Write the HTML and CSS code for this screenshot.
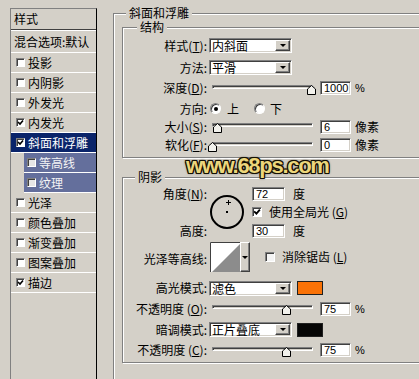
FILE: index.html
```html
<!DOCTYPE html>
<html lang="zh-CN">
<head>
    <meta charset="UTF-8">
    <meta name="viewport" content="width=device-width, initial-scale=1.0">
    <title>图层样式 - 斜面和浮雕</title>
    <link rel="stylesheet" href="styles.css">
</head>
<body>

    <div class="sidebar">
        <div class="side-head">样式</div>
        <div class="side-blend">混合选项:默认</div>
        <ul class="fx-list">
            <li class="fx"><span class="cb"></span>投影</li>
            <li class="fx"><span class="cb"></span>内阴影</li>
            <li class="fx"><span class="cb"></span>外发光</li>
            <li class="fx"><span class="cb"><svg viewBox="0 0 7 7"><polyline points="1,3 3,5 6,1.5"/></svg></span>内发光</li>
            <li class="fx current"><span class="cb"><svg viewBox="0 0 7 7"><polyline points="1,3 3,5 6,1.5"/></svg></span>斜面和浮雕</li>
            <li class="fx sub"><span class="cb"></span>等高线</li>
            <li class="fx sub"><span class="cb"></span>纹理</li>
            <li class="fx"><span class="cb"></span>光泽</li>
            <li class="fx"><span class="cb"></span>颜色叠加</li>
            <li class="fx"><span class="cb"></span>渐变叠加</li>
            <li class="fx"><span class="cb"></span>图案叠加</li>
            <li class="fx"><span class="cb"><svg viewBox="0 0 7 7"><polyline points="1,3 3,5 6,1.5"/></svg></span>描边</li>
        </ul>
    </div>

    <div class="main">
        <fieldset class="group bevel">
            <legend>斜面和浮雕</legend>

            <fieldset class="group structure">
                <legend>结构</legend>
                <div class="form">
                    <span class="lbl">样式(<u>T</u>):</span>
                    <div class="ctrl">
                        <div class="select"><span>内斜面</span><i class="drop"></i></div>
                    </div>

                    <span class="lbl">方法:</span>
                    <div class="ctrl">
                        <div class="select"><span>平滑</span><i class="drop"></i></div>
                    </div>

                    <span class="lbl">深度(<u>D</u>):</span>
                    <div class="ctrl">
                        <div class="slider"><svg class="thumb" style="left: 100%" viewBox="0 0 9 10"><path d="M0.5 9.5V4L4.5 0.5L8.5 4V9.5Z"/></svg></div>
                        <span class="num">1000</span><span class="unit pct">%</span>
                    </div>

                    <span class="lbl">方向:</span>
                    <div class="ctrl radios">
                        <span class="radio on"></span><span class="rtext">上</span>
                        <span class="radio"></span><span class="rtext">下</span>
                    </div>

                    <span class="lbl">大小(<u>S</u>):</span>
                    <div class="ctrl">
                        <div class="slider"><svg class="thumb" style="left: 5%" viewBox="0 0 9 10"><path d="M0.5 9.5V4L4.5 0.5L8.5 4V9.5Z"/></svg></div>
                        <span class="num">6</span><span class="unit">像素</span>
                    </div>

                    <span class="lbl">软化(<u>F</u>):</span>
                    <div class="ctrl">
                        <div class="slider"><svg class="thumb" style="left: 0%" viewBox="0 0 9 10"><path d="M0.5 9.5V4L4.5 0.5L8.5 4V9.5Z"/></svg></div>
                        <span class="num">0</span><span class="unit">像素</span>
                    </div>
                </div>
            </fieldset>

            <fieldset class="group shading">
                <legend>阴影</legend>
                <div class="angle">
                    <span class="lbl l1">角度(<u>N</u>):</span>
                    <span class="lbl l3">高度:</span>
                    <div class="dial">
                        <svg width="36" height="36" viewBox="0 0 36 36">
                            <circle cx="18" cy="18" r="16" fill="none" stroke="#000" stroke-width="2"/>
                            <rect x="17" y="17" width="2" height="2" fill="#000"/>
                            <path d="M17 8.5H22M19.5 6V11" stroke="#000" stroke-width="1" fill="none"/>
                        </svg>
                    </div>
                    <div class="ctrl c1"><span class="num wide">72</span><span class="unit deg">度</span></div>
                    <div class="ctrl c2">
                        <span class="cb big"><svg viewBox="0 0 7 7"><polyline points="1,3 3,5 6,1.5"/></svg></span>
                        <span class="cb-text">使用全局光 (<u>G</u>)</span>
                    </div>
                    <div class="ctrl c3"><span class="num wide">30</span><span class="unit deg">度</span></div>
                </div>

                <div class="form shade-rows">
                    <span class="lbl">光泽等高线:</span>
                    <div class="ctrl contour-ctrl">
                        <div class="contour">
                            <svg width="30" height="30" viewBox="0 0 30 30">
                                <rect x="0" y="0" width="30" height="30" fill="#fff"/>
                                <polygon points="2,30 30,2 30,30" fill="#8c8c8c"/>
                                <path d="M0.5 30V0.5H30" stroke="#404040" fill="none"/>
                            </svg>
                            <i class="drop tall"></i>
                        </div>
                        <span class="cb big light"></span>
                        <span class="cb-text">消除锯齿 (<u>L</u>)</span>
                    </div>

                    <span class="lbl">高光模式:</span>
                    <div class="ctrl">
                        <div class="select"><span>滤色</span><i class="drop"></i></div>
                        <span class="swatch orange"></span>
                    </div>

                    <span class="lbl">不透明度 (<u>O</u>):</span>
                    <div class="ctrl">
                        <div class="slider"><svg class="thumb" style="left: 75%" viewBox="0 0 9 10"><path d="M0.5 9.5V4L4.5 0.5L8.5 4V9.5Z"/></svg></div>
                        <span class="num">75</span><span class="unit pct">%</span>
                    </div>

                    <span class="lbl">暗调模式:</span>
                    <div class="ctrl">
                        <div class="select"><span>正片叠底</span><i class="drop"></i></div>
                        <span class="swatch black"></span>
                    </div>

                    <span class="lbl">不透明度 (<u>C</u>):</span>
                    <div class="ctrl">
                        <div class="slider"><svg class="thumb" style="left: 75%" viewBox="0 0 9 10"><path d="M0.5 9.5V4L4.5 0.5L8.5 4V9.5Z"/></svg></div>
                        <span class="num">75</span><span class="unit pct">%</span>
                    </div>
                </div>
            </fieldset>
        </fieldset>
    </div>

    <div class="watermark">www.68ps.com</div>

</body>
</html>
```

FILE: styles.css
```css
* {
    box-sizing: border-box;
}
html, body {
    margin: 0;
    height: 100%;
}
body {
    display: flex;
    position: relative;
    overflow: hidden;
    background: #d4d0c8;
    color: #000;
    font: 12px/14px "Noto Sans CJK SC", "Liberation Sans", sans-serif;
}
u {
    text-decoration: underline;
    text-underline-offset: 1px;
}

/* effect list on the left */
.sidebar {
    flex: 0 0 87px;
    margin: 8px 0 0 10px;
    border-top: 1px solid #808080;
    border-left: 1px solid #808080;
    border-right: 1px solid #000;
}
.side-head {
    height: 21px;
    padding-left: 3px;
    line-height: 20px;
    border-bottom: 1px solid #404040;
    box-shadow: 0 1px 0 #fff;
}
.side-blend {
    height: 22px;
    margin-top: 1px;
    padding-left: 3px;
    line-height: 21px;
    white-space: nowrap;
    border-bottom: 1px solid #fff;
}
.fx-list {
    margin: 0;
    padding: 0;
    list-style: none;
}
.fx {
    display: flex;
    align-items: center;
    gap: 3px;
    height: 20px;
    padding-left: 5px;
    border-bottom: 1px solid #fff;
    white-space: nowrap;
}
.fx.current {
    background: #0a246a;
    color: #fff;
}
.fx.sub {
    margin-left: 13px;
    padding-left: 3px;
    background: #646f9c;
    color: #f4f4f4;
}
.fx.sub .cb {
    background: #e6e6e6;
}

/* checkbox */
.cb {
    display: inline-flex;
    flex: 0 0 9px;
    width: 9px;
    height: 9px;
    background: #fff;
    border: 1px solid;
    border-color: #808080 #fff #fff #808080;
    box-shadow: inset 1px 1px #404040;
}
.cb svg {
    width: 7px;
    height: 7px;
    fill: none;
    stroke: #000;
    stroke-width: 1.6;
}
.cb.big {
    flex-basis: 10px;
    width: 10px;
    height: 10px;
}
.cb.big svg {
    width: 8px;
    height: 8px;
}
.cb-text {
    margin-left: 7px;
    white-space: nowrap;
}

/* dialog body */
.main {
    flex: 0 0 360px;
    margin-left: 16px;
}
.group {
    margin: 0;
    padding: 0;
    min-width: 0;
    border: 1px solid #808080;
    box-shadow: inset 1px 1px #fff, 1px 1px #fff;
}
.group > legend {
    padding: 0 3px;
    line-height: 14px;
    background: #d4d0c8;
}
.bevel {
    margin-top: 6px;
    padding: 0 0 40px 8px;
}
.bevel > legend {
    margin-left: 4px;
}
.structure > legend {
    margin-left: 14px;
}
.shading {
    margin-top: 12px;
}
.shading > legend {
    margin-left: 12px;
}

.form {
    display: grid;
    grid-template-columns: 84px auto;
    column-gap: 2px;
    align-items: center;
}
.structure .form {
    grid-template-rows: 23px 21px 20px 21px 15px 22px;
    padding-bottom: 1px;
}
.lbl {
    text-align: right;
    white-space: nowrap;
}
.ctrl {
    display: flex;
    align-items: center;
    white-space: nowrap;
}

/* dropdown */
.select {
    display: flex;
    width: 83px;
    height: 15px;
    background: #fff;
    border: 1px solid;
    border-color: #808080 #fff #fff #808080;
    box-shadow: inset 1px 1px #404040, inset -1px -1px #d4d0c8;
}
.select span {
    flex: 1;
    padding-left: 2px;
    line-height: 13px;
}
.drop {
    display: flex;
    align-items: center;
    justify-content: center;
    width: 15px;
    margin: 1px;
    background: #d4d0c8;
    border: 1px solid;
    border-color: #fff #404040 #404040 #fff;
    box-shadow: inset -1px -1px #808080;
}
.drop::after {
    content: "";
    border-left: 3px solid transparent;
    border-right: 3px solid transparent;
    border-top: 3px solid #000;
}

/* slider */
.slider {
    position: relative;
    width: 101px;
    height: 4px;
    margin: 0 7px 3px 3px;
    border: 1px solid;
    border-color: #808080 #fff #fff #808080;
    box-shadow: inset 1px 1px #404040;
}
.thumb {
    position: absolute;
    top: -1px;
    width: 9px;
    height: 10px;
    margin-left: -5px;
    fill: #f2f1ec;
    stroke: #000;
    stroke-width: 1;
}

/* number fields */
.num {
    width: 31px;
    height: 14px;
    padding-left: 3px;
    background: #fff;
    border: 1px solid;
    border-color: #808080 #fff #fff #808080;
    box-shadow: inset 1px 1px #404040, inset -1px -1px #d4d0c8;
    font: 11px/12px "Liberation Sans", sans-serif;
}
.num.wide {
    width: 33px;
}
.unit {
    margin-left: 4px;
}
.unit.pct {
    font: 11px "Liberation Sans", sans-serif;
}
.unit.deg {
    margin-left: 8px;
}

/* radio */
.radios {
    padding-left: 1px;
}
.radio {
    display: flex;
    align-items: center;
    justify-content: center;
    width: 11px;
    height: 11px;
    border-radius: 50%;
    background: #fff;
    border: 1px solid;
    border-color: #808080 #fff #fff #808080;
    box-shadow: inset 1px 1px #404040;
}
.radio.on::after {
    content: "";
    width: 4px;
    height: 4px;
    border-radius: 50%;
    background: #000;
}
.rtext {
    margin: 0 15px 0 6px;
}
.rtext:last-child {
    margin: 0 0 0 5px;
}

/* shading section */
.angle {
    display: grid;
    grid-template-columns: 84px 41px auto;
    grid-template-rows: 19px 18px 19px;
    grid-template-areas:
        "l1 dial c1"
        ".  dial c2"
        "l3 dial c3";
    column-gap: 2px;
    align-items: center;
}
.l1 { grid-area: l1; }
.l3 { grid-area: l3; }
.c1 { grid-area: c1; }
.c2 { grid-area: c2; }
.c3 { grid-area: c3; }
.dial {
    grid-area: dial;
    display: flex;
}

.shade-rows {
    grid-template-rows: 38px 20px 21px 21px 20px;
    padding-bottom: 2px;
}
.contour-ctrl {
    align-self: start;
    margin-top: 2px;
    padding-left: 1px;
}
.contour {
    display: flex;
    height: 30px;
    margin-right: 15px;
}
.drop.tall {
    width: 10px;
    margin: 0;
}
.cb.light {
    background: #f4f4f4;
}

.swatch {
    width: 26px;
    height: 14px;
    margin-left: 5px;
    border: 1px solid #202020;
}
.swatch.orange {
    background: #f97207;
}
.swatch.black {
    background: #050505;
}

/* site watermark over the dialog */
.watermark {
    position: absolute;
    left: 186px;
    top: 155px;
    font: bold 22px/22px "Liberation Sans", sans-serif;
    letter-spacing: -1.3px;
    color: #ecd67c;
    text-shadow:
        1px 0 #141004, -1px 0 #141004, 0 1px #141004, 0 -1px #141004,
        1px 1px #141004, -1px -1px #141004, 1px -1px #141004, -1px 1px #141004,
        0 0 3px #000;
}
```
